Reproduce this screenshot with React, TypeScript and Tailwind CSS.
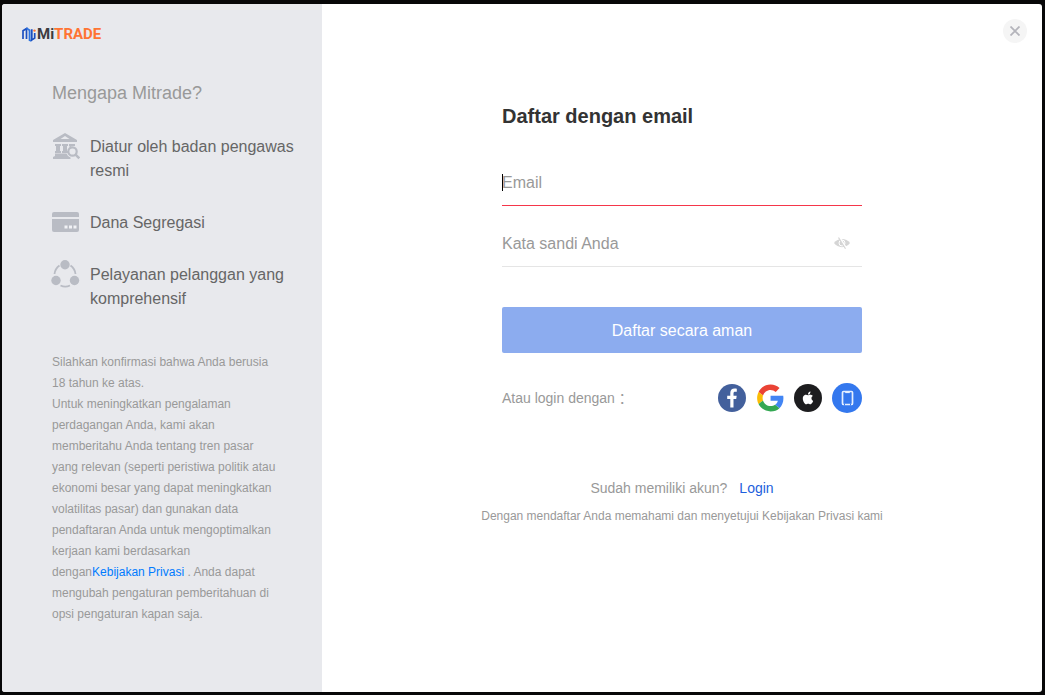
import React from 'react';

const BankIcon = () => (
  <svg className="h-7 w-7 shrink-0" viewBox="0 1 28 28" fill="#b9bcc4" aria-hidden="true">
    <path d="M13 1 25 8v2H1V8zM13 4 8.500 7h9z" fillRule="evenodd" />
    <path d="M3 12h6v2H8v5h1v2H3v-2h1v-5H3zM10 12h6v2h-1v5h1v2h-6v-2h1v-5h-1zM17 12h6v2h-2.500a6 6 0 0 0-3 2V14H17z" />
    <path d="M3 21.500h11.500a6.500 6.500 0 0 0 4 4V27H1v-2l2-1z" />
    <circle cx="20.500" cy="19.500" r="4.200" fill="#e8e9ed" stroke="#b9bcc4" strokeWidth="2.200" />
    <path d="m23.300 22.300 4 4" stroke="#b9bcc4" strokeWidth="2.400" />
  </svg>
);

const CardIcon = () => (
  <svg className="h-7 w-7 shrink-0" viewBox="0 1 28 28" fill="#b9bcc4" aria-hidden="true">
    <path d="M2 4h23a2 2 0 0 1 2 2v3H0V6a2 2 0 0 1 2-2z" />
    <path d="M0 11h27v11a2 2 0 0 1-2 2H2a2 2 0 0 1-2-2z" />
    <path d="M12.500 17.500h3v3h-3zM17 17.500h3v3h-3zM21.500 17.500h3v3h-3z" fill="#f1f2f5" />
  </svg>
);

const PeopleIcon = () => (
  <svg className="h-7 w-7 shrink-0 overflow-visible" viewBox="0 1 28 28" fill="#b9bcc4" aria-hidden="true">
    <circle cx="13" cy="4.800" r="4.700" />
    <circle cx="4" cy="20.500" r="4.700" />
    <circle cx="22.500" cy="20.500" r="4.700" />
    <path
      d="M7.500 5.500a12 12 0 0 0-5 8.500M18.500 5.500a12 12 0 0 1 5 8.500M8.500 25.500a11 11 0 0 0 9.500 0"
      fill="none"
      stroke="#b9bcc4"
      strokeWidth="1.800"
    />
  </svg>
);

const features = [
  { icon: <BankIcon />, text: 'Diatur oleh badan pengawas resmi' },
  { icon: <CardIcon />, text: 'Dana Segregasi' },
  { icon: <PeopleIcon />, text: 'Pelayanan pelanggan yang komprehensif' },
];

const Logo: React.FC = () => (
  <div className="flex h-5 items-center gap-px">
    <svg className="h-4 w-[14px]" viewBox="0 0 14 16" fill="none" aria-hidden="true">
      <path d="M1 13V4.800L4.500 2.500V13" stroke="#1c4fc0" strokeWidth="1.700" />
      <path d="M4.500 2.300 7.600 4.200V14.200L9.400 15" stroke="#2e74e0" strokeWidth="1.900" />
      <path d="M9.800 3.200V14l2.900-1.900V7" stroke="#1c4fc0" strokeWidth="1.700" />
      <circle cx="12.500" cy="4.600" r="1.200" fill="#ff7433" />
    </svg>
    <span className="font-['Roboto'] text-[15px] leading-5 font-bold text-[#3c3c40]">
      Mi<span className="text-[#ff7433]">TRADE</span>
    </span>
  </div>
);

const Sidebar: React.FC = () => (
  <aside className="w-80 shrink-0 bg-[#e8e9ed] px-5 pt-5">
    <Logo />
    <div className="pl-[30px]">
      <h2 className="mt-9 text-lg leading-[26px] text-[#999]">Mengapa Mitrade?</h2>
      <ul className="mt-[29px] space-y-7">
        {features.map((feature) => (
          <li key={feature.text} className="flex gap-[10px]">
            <span className="flex h-6 items-center">{feature.icon}</span>
            <span className="text-base leading-6 text-[#666]">{feature.text}</span>
          </li>
        ))}
      </ul>
      <p className="mt-[41px] w-[226px] text-xs leading-[21px] text-[#999]">
        Silahkan konfirmasi bahwa Anda berusia 18 tahun ke atas.
        <br />
        Untuk meningkatkan pengalaman perdagangan Anda, kami akan memberitahu Anda tentang tren pasar yang
        relevan (seperti peristiwa politik atau ekonomi besar yang dapat meningkatkan volatilitas pasar) dan
        gunakan data pendaftaran Anda untuk mengoptimalkan kerjaan kami berdasarkan dengan
        <a href="#privasi" className="text-[#007bff]">Kebijakan Privasi</a> . Anda dapat mengubah pengaturan
        pemberitahuan di opsi pengaturan kapan saja.
      </p>
    </div>
  </aside>
);

const SocialButtons: React.FC = () => (
  <div className="flex items-center gap-[10px]">
    <button type="button" aria-label="Facebook">
      <svg className="h-7 w-7" viewBox="0 0 28 28">
        <circle cx="14" cy="14" r="14" fill="#43609c" />
        <path d="M12.300 23.500V15H9.200v-3.300h3.100V9c0-2.900 1.700-4.400 4.300-4.400 1 0 1.700.1 2.200.2v3h-1.600c-1.300 0-1.700.7-1.700 1.600v2.300h3.200l-.5 3.300h-2.700v8.500z" fill="#fff" />
      </svg>
    </button>
    <button type="button" aria-label="Google">
      <svg className="h-7 w-7" viewBox="-2 -1 50 50">
        <path fill="#EA4335" d="M24 9.500c3.540 0 6.710 1.220 9.210 3.600l6.850-6.850C35.900 2.380 30.470 0 24 0 14.620 0 6.510 5.380 2.560 13.220l7.980 6.190C12.430 13.720 17.740 9.500 24 9.500z" />
        <path fill="#4285F4" d="M46.980 24.550c0-1.570-.15-3.090-.38-4.550H24v9.020h12.940c-.58 2.960-2.260 5.480-4.780 7.180l7.730 6c4.510-4.180 7.090-10.360 7.090-17.650z" />
        <path fill="#FBBC05" d="M10.530 28.590c-.48-1.450-.76-2.990-.76-4.590s.27-3.140.76-4.590l-7.980-6.190C.92 16.460 0 20.120 0 24c0 3.880.92 7.540 2.560 10.780l7.970-6.190z" />
        <path fill="#34A853" d="M24 48c6.480 0 11.930-2.130 15.890-5.810l-7.730-6c-2.150 1.450-4.920 2.300-8.160 2.300-6.260 0-11.570-4.220-13.470-9.910l-7.980 6.190C6.510 42.620 14.620 48 24 48z" />
      </svg>
    </button>
    <button type="button" aria-label="Apple">
      <svg className="h-7 w-7" viewBox="0 0 28 28">
        <circle cx="14" cy="14" r="14" fill="#1d1d1f" />
        <g transform="translate(7.600 7.600) scale(.53)" fill="#fff">
          <path d="M12.152 6.896c-.948 0-2.415-1.078-3.960-1.040-2.040.027-3.910 1.183-4.961 3.014-2.117 3.675-.546 9.103 1.519 12.090 1.013 1.454 2.208 3.090 3.792 3.039 1.520-.065 2.090-.987 3.935-.987 1.831 0 2.350.987 3.960.948 1.637-.026 2.676-1.480 3.676-2.948 1.156-1.688 1.636-3.325 1.662-3.415-.039-.013-3.182-1.221-3.220-4.857-.026-3.040 2.480-4.494 2.597-4.559-1.429-2.090-3.623-2.324-4.390-2.376-2-.156-3.675 1.090-4.610 1.090zM15.530 3.830c.843-1.012 1.400-2.427 1.245-3.830-1.207.052-2.662.805-3.532 1.818-.780.896-1.454 2.338-1.273 3.714 1.338.104 2.715-.688 3.559-1.701" />
        </g>
      </svg>
    </button>
    <button type="button" aria-label="Telepon">
      <svg className="h-[30px] w-[30px]" viewBox="0 0 30 30">
        <circle cx="15" cy="15" r="15" fill="#3478ee" />
        <rect x="10.500" y="8.500" width="10" height="13" rx="1" fill="none" stroke="#e4efff" strokeWidth="1.700" />
        <path d="M13.200 9.500h4.600" stroke="#e4efff" strokeWidth="1.200" />
        <path d="M12.500 20.500v2M18.500 20.500v2" stroke="#3478ee" />
      </svg>
    </button>
  </div>
);

const fieldClass =
  'block h-[47px] w-full border-b bg-transparent pt-[2px] text-base text-[#333] outline-none placeholder:text-[#999]';

const SignupForm: React.FC = () => (
  <form className="w-[360px]" onSubmit={(e) => e.preventDefault()}>
    <h1 className="text-xl leading-7 font-bold text-[#333]">Daftar dengan email</h1>
    <div className="relative mt-[29px]">
      <input type="email" aria-label="Email" placeholder="Email" className={`${fieldClass} border-[#f5364a]`} />
      <span className="absolute top-[15px] left-0 h-[17px] w-px bg-black" />
    </div>
    <div className="relative mt-[14px]">
      <input
        type="password"
        aria-label="Kata sandi Anda"
        placeholder="Kata sandi Anda"
        className={`${fieldClass} border-[#e5e5e5] pr-10`}
      />
      <button type="button" aria-label="Tampilkan kata sandi" className="absolute top-[15px] right-3">
        <svg className="h-4 w-4" viewBox="0 0 16 16" fill="none">
          <path d="M0 8C3.500 2.500 12.500 2.500 16 8 12.500 13.500 3.500 13.500 0 8z" fill="#d5d5d5" />
          <circle cx="8" cy="8" r="3" stroke="#fff" />
          <path d="M5.500 2.500 12 13" stroke="#fff" strokeWidth="2" />
          <path d="M4.500 2.500 11.500 13.800" stroke="#d5d5d5" strokeWidth="1.200" />
        </svg>
      </button>
    </div>
    <button type="submit" className="mt-10 h-[46px] w-full rounded-xs bg-[#8cacef] pt-[2px] text-base text-white">
      Daftar secara aman
    </button>
    <div className="mt-[30px] flex h-[30px] items-center justify-between">
      <span className="text-sm text-[#999]">Atau login dengan ：</span>
      <SocialButtons />
    </div>
  </form>
);

const App: React.FC = () => {
  return (
    <div className="flex min-h-screen bg-[#070708] pt-1 pr-[3px] pb-[3px] pl-[2px] font-['Liberation_Sans','Noto_Sans_CJK_SC',sans-serif]">
      <div role="dialog" aria-label="Daftar dengan email" className="flex flex-1 overflow-hidden rounded-[3px] bg-white">
        <Sidebar />
        <main className="relative flex flex-1 flex-col items-center pt-[98px]">
          <button
            type="button"
            aria-label="Tutup"
            className="absolute top-[15px] right-[15px] flex h-6 w-6 items-center justify-center rounded-full bg-[#f5f5f5]"
          >
            <svg className="h-[10px] w-[10px]" viewBox="0 0 10 10" stroke="#b4b4bb" strokeWidth="1.800">
              <path d="m.5.5 9 9M9.500.5l-9 9" />
            </svg>
          </button>
          <SignupForm />
          <p className="mt-[65px] flex gap-3 text-sm leading-5 text-[#999]">
            Sudah memiliki akun?
            <a href="#login" className="text-[#1e5fdc]">Login</a>
          </p>
          <p className="mt-[9px] text-xs leading-[18px] text-[#999]">
            Dengan mendaftar Anda memahami dan menyetujui Kebijakan Privasi kami
          </p>
        </main>
      </div>
    </div>
  );
};

export default App;
